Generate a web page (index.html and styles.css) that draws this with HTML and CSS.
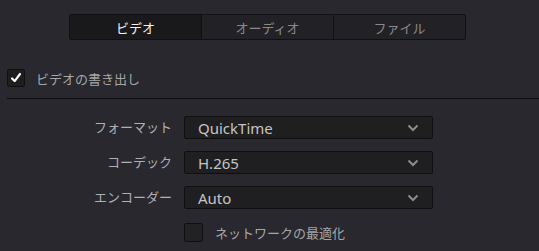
FILE: index.html
```html
<!DOCTYPE html>
<html lang="ja">
<head>
  <meta charset="UTF-8">
  <title>書き出し設定</title>
  <link rel="stylesheet" href="styles.css">
</head>
<body>
  <div class="panel">
    <!-- タブ -->
    <div class="tabs">
      <div class="tab active">ビデオ</div>
      <div class="tab">オーディオ</div>
      <div class="tab">ファイル</div>
    </div>

    <!-- ビデオの書き出し -->
    <label class="export-row">
      <span class="check checked">
        <svg viewBox="0 0 18 18" width="18" height="18"><path d="M4.5 9.5 L7.5 12.5 L13.5 4.5" fill="none" stroke="#fff" stroke-width="2.4" stroke-linecap="round" stroke-linejoin="round"/></svg>
      </span>
      <span class="export-label">ビデオの書き出し</span>
    </label>
    <div class="divider"></div>

    <div class="form">
      <div class="label">フォーマット</div>
      <div class="select"><span>QuickTime</span><svg class="caret" viewBox="0 0 12 8" width="12" height="8"><path d="M1.5 1.5 L6 6 L10.5 1.5" fill="none" stroke="#8c8c8c" stroke-width="2"/></svg></div>

      <div class="label">コーデック</div>
      <div class="select"><span>H.265</span><svg class="caret" viewBox="0 0 12 8" width="12" height="8"><path d="M1.5 1.5 L6 6 L10.5 1.5" fill="none" stroke="#8c8c8c" stroke-width="2"/></svg></div>

      <div class="label">エンコーダー</div>
      <div class="select"><span>Auto</span><svg class="caret" viewBox="0 0 12 8" width="12" height="8"><path d="M1.5 1.5 L6 6 L10.5 1.5" fill="none" stroke="#8c8c8c" stroke-width="2"/></svg></div>

      <div></div>
      <label class="opt-row">
        <span class="check"></span>
        <span class="opt-label">ネットワークの最適化</span>
      </label>
    </div>
  </div>
</body>
</html>
```

FILE: styles.css
```css
* { margin: 0; padding: 0; box-sizing: border-box; }
body {
  background-color: #28282e;
  font-family: "Noto Sans", "Noto Sans CJK JP", sans-serif;
  color: #a8a8a8;
  width: 539px;
  height: 251px;
  overflow: hidden;
}
.panel { padding-top: 14px; }

/* タブ */
.tabs {
  display: flex;
  margin-left: 69px;
  width: 397px;
  height: 26px;
  border: 1px solid #111113;
  border-radius: 2px;
  background-color: #222226;
}
.tab {
  flex: 1;
  display: flex;
  align-items: center;
  justify-content: center;
  font-size: 13px;
  color: #8a8a8c;
  border-left: 1px solid #111113;
}
.tab:first-child { border-left: none; }
.tab.active { background-color: #19191b; color: #f2f2f2; }

/* チェックボックス */
.check {
  width: 18px;
  height: 18px;
  border: 1px solid #0f0f10;
  border-radius: 2px;
  background-color: #1e1e20;
  display: flex;
  align-items: center;
  justify-content: center;
  flex-shrink: 0;
}
.check svg { display: block; }

.export-row {
  display: flex;
  align-items: center;
  margin-top: 29px;
  margin-left: 7px;
  height: 18px;
}
.export-label { margin-left: 11px; font-size: 13px; color: #a6a6a8; }

.divider {
  margin-top: 11px;
  margin-left: 7px;
  height: 1px;
  background-color: #0e0e10;
}

/* フォーム */
.form {
  display: grid;
  grid-template-columns: 172px 249px;
  column-gap: 12px;
  row-gap: 12px;
  margin-top: 17px;
}
.label {
  text-align: right;
  font-size: 13px;
  color: #b0b0b2;
  line-height: 23px;
}
.select {
  height: 23px;
  display: flex;
  align-items: center;
  justify-content: space-between;
  padding: 0 13px 0 13px;
  background-color: #1f1f21;
  border: 1px solid #0f0f10;
  border-radius: 2px;
  font-size: 15px;
  color: #c4c4c6;
}
.caret { display: block; }

.opt-row {
  display: flex;
  align-items: center;
  margin-top: 2px;
}
.opt-row .check { width: 19px; height: 19px; background-color: #222224; }
.opt-label { margin-left: 12px; font-size: 13px; color: #a6a6a8; }
```
